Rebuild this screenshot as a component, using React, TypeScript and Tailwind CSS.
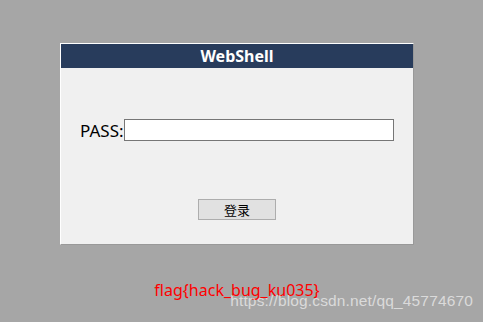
export default function App() {
  return (
    <div className="relative h-[322px] w-[483px] overflow-hidden bg-[#a6a6a6] font-['Noto_Sans','Noto_Sans_CJK_SC',sans-serif]">
      <div className="pl-[60px] pt-[43px]">
        {/* Login panel */}
        <div className="w-[354px] h-[202px] border-t border-l border-white border-r border-b border-r-[#999999] border-b-[#999999] bg-[#f0f0f0] flex flex-col">
          <div className="h-[24px] bg-[#283c5c] flex items-center justify-center">
            <span className="text-[16px] font-bold leading-none text-white">WebShell</span>
          </div>
          <div className="mt-[51px] flex items-center pl-[19px]">
            <label className="text-[17px] leading-none text-black">PASS:</label>
            <input
              type="password"
              className="h-[22px] w-[270px] bg-white border border-[#767676] outline-none"
            />
          </div>
          <div className="mt-[58px] flex justify-center">
            <button className="h-[21px] w-[78px] bg-[#e1e1e1] border border-[#adadad] text-[13px] leading-none text-black font-['Noto_Sans_CJK_SC',sans-serif]">
              登录
            </button>
          </div>
        </div>
        <div className="w-[354px] mt-[35px] flex justify-center">
          <span className="text-[16px] leading-[20px] text-[#ff0000]">flag{"{"}hack_bug_ku035{"}"}</span>
        </div>
      </div>
      {/* watermark */}
      <span className="absolute right-[10px] top-[291px] text-[15.5px] tracking-[0.15px] leading-[20px] text-white/60 font-['Liberation_Sans',sans-serif] whitespace-nowrap">
        https://blog.csdn.net/qq_45774670
      </span>
    </div>
  );
}
